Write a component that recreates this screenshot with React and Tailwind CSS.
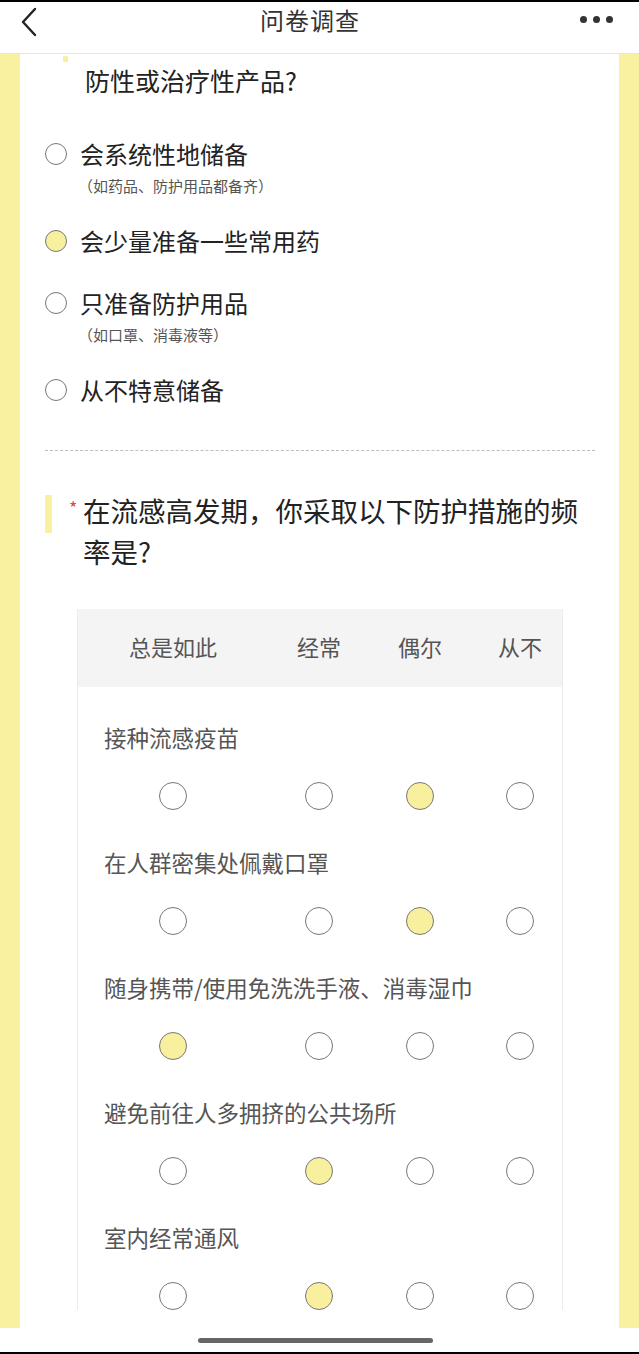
import React from "react";

const font = { fontFamily: '"Noto Sans CJK SC", "Noto Sans", sans-serif' };

const options = [
  { label: "会系统性地储备", sub: "（如药品、防护用品都备齐）" },
  { label: "会少量准备一些常用药", checked: true },
  { label: "只准备防护用品", sub: "（如口罩、消毒液等）" },
  { label: "从不特意储备" },
];

const rows = [
  { label: "接种流感疫苗", pick: 2 },
  { label: "在人群密集处佩戴口罩", pick: 2 },
  { label: "随身携带/使用免洗洗手液、消毒湿巾", pick: 0 },
  { label: "避免前往人多拥挤的公共场所", pick: 1 },
  { label: "室内经常通风", pick: 1 },
];

// column widths inside the 486px table
const cols = ["w-[190px]", "w-[102px]", "w-[100px]", "w-[100px]"];

function Radio({ checked, size = "h-[28px] w-[28px]" }) {
  return (
    <span
      className={`${size} shrink-0 rounded-full border-[1.5px] border-[#777] ${
        checked ? "bg-[#f8ef9f]" : "bg-white"
      }`}
    />
  );
}

export default function App() {
  return (
    <div className="h-[1354px] w-[639px] overflow-hidden bg-white flex flex-col border-t-2 border-black" style={font}>
      {/* Nav bar */}
      <header className="h-[52px] shrink-0 flex items-center justify-between px-[16px] border-b border-[#e5e5e5]">
        <svg width="22" height="30" viewBox="0 0 22 30" className="ml-[2px] -mt-[12px]">
          <path d="M17 2 L5 15 L17 28" fill="none" stroke="#222" strokeWidth="2.4" strokeLinecap="round" strokeLinejoin="round" />
        </svg>
        <h1 className="text-[24px] text-[#333] tracking-[1px] -mt-[16px]">问卷调查</h1>
        <div className="flex gap-[6px] mr-[10px] -mt-[16px]">
          <span className="h-[7px] w-[7px] rounded-full bg-[#333]" />
          <span className="h-[7px] w-[7px] rounded-full bg-[#333]" />
          <span className="h-[7px] w-[7px] rounded-full bg-[#333]" />
        </div>
      </header>

      {/* Body */}
      <div className="flex-1 flex bg-[#f9f0a0] px-[20px] overflow-hidden">
        <main className="flex-1 bg-white pl-[25px] pr-[24px] overflow-hidden">
          <div className="h-[6px] w-[5px] bg-[#f9f0a0] ml-[18px] mt-[2px]" />
          <p className="pl-[40px] text-[25px] text-[#222] leading-[36px]">防性或治疗性产品?</p>

          <div className="mt-[41px] flex flex-col">
            {options.map((o, i) => (
              <div key={i} className={i === 0 ? "" : o.sub ? "mt-[32px]" : "mt-[30px]"}>
                <div className="flex items-center gap-[13px] h-[30px]">
                  <Radio checked={o.checked} size="h-[22px] w-[22px]" />
                  <span className="text-[24px] text-[#222]">{o.label}</span>
                </div>
                {o.sub && (
                  <p className="pl-[33px] text-[15px] text-[#555] leading-[20px] mt-[7px]">{o.sub}</p>
                )}
              </div>
            ))}
          </div>

          <div className="mt-[45px] border-t border-dashed border-[#bdbdbd]" />

          {/* Question */}
          <div className="mt-[41px] flex">
            <div className="w-[7px] h-[38px] bg-[#f9f0a0] mt-[3px] shrink-0" />
            <span className="text-[#e64545] text-[18px] ml-[17px] mt-[2px] w-[14px] shrink-0">*</span>
            <h2 className="w-[508px] text-[27.5px] text-[#222] leading-[41px] -mt-[2px]">
              在流感高发期，你采取以下防护措施的频率是?
            </h2>
          </div>

          {/* Matrix table */}
          <div className="mt-[37px] ml-[32px] w-[486px] border-x border-[#ececec]">
            <div className="h-[78px] bg-[#f4f4f4] flex items-center text-[22px] text-[#555] pb-[4px]">
              {["总是如此", "经常", "偶尔", "从不"].map((t, c) => (
                <span key={c} className={`${cols[c]} shrink-0 text-center`}>{t}</span>
              ))}
            </div>
            {rows.map((r, i) => (
              <div key={i} className={i === 0 ? "pt-[35px]" : "pt-[37px]"}>
                <p className="pl-[26px] text-[22.5px] text-[#555] leading-[30px]">{r.label}</p>
                <div className="flex mt-[30px]">
                  {cols.map((w, c) => (
                    <div key={c} className={`${w} shrink-0 flex justify-center`}>
                      <Radio checked={r.pick === c} />
                    </div>
                  ))}
                </div>
              </div>
            ))}
          </div>
        </main>
      </div>

      {/* Home indicator */}
      <footer className="h-[26px] shrink-0 bg-white flex items-center justify-center border-b-2 border-black">
        <span className="h-[5px] w-[235px] rounded-full bg-[#666] -ml-[8px]" />
      </footer>
    </div>
  );
}
